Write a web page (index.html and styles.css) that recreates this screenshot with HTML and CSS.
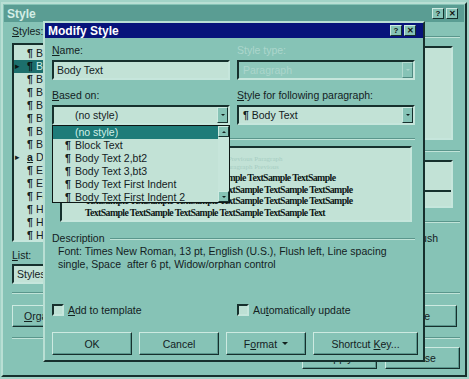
FILE: index.html
```html
<!DOCTYPE html>
<html lang="en">
<head>
    <meta charset="UTF-8">
    <title>Modify Style</title>
    <link rel="stylesheet" href="styles.css">
</head>
<body>
<div class="desk">

    <!-- Style dialog, sitting behind -->
    <div class="win style-win">
        <div class="title inactive">
            <span>Style</span>
            <div class="tbtns"><span class="tb">?</span><span class="tb">&#x2715;</span></div>
        </div>
        <div class="sbody">
            <div class="stop">
                <div class="scol">
                    <div class="lbl first"><u>S</u>tyles:</div>
                    <div class="listbox">
                        <div class="li"><span class="mk"></span><span class="pil">¶</span>Balloon Text</div>
                        <div class="li sel"><span class="mk">&#x25B8;</span><span class="pil">¶</span>Body Text</div>
                        <div class="li"><span class="mk"></span><span class="pil">¶</span>Body Text 2,bt2</div>
                        <div class="li"><span class="mk"></span><span class="pil">¶</span>Body Text 3,bt3</div>
                        <div class="li"><span class="mk"></span><span class="pil">¶</span>Body Text First Indent</div>
                        <div class="li"><span class="mk"></span><span class="pil">¶</span>Body Text First Indent 2</div>
                        <div class="li"><span class="mk"></span><span class="pil">¶</span>Body Text Indent</div>
                        <div class="li"><span class="mk"></span><span class="pil">¶</span>Bullet</div>
                        <div class="li"><span class="mk">&#x25B8;</span><span class="pil"><u>a</u></span>Default Paragraph Font</div>
                        <div class="li"><span class="mk"></span><span class="pil">¶</span>Envelope Address</div>
                        <div class="li"><span class="mk"></span><span class="pil">¶</span>Envelope Return</div>
                        <div class="li"><span class="mk"></span><span class="pil">¶</span>Footer</div>
                        <div class="li"><span class="mk"></span><span class="pil">¶</span>Header</div>
                        <div class="li"><span class="mk"></span><span class="pil">¶</span>Heading 1</div>
                        <div class="li"><span class="mk"></span><span class="pil">¶</span>Heading 2</div>
                    </div>
                    <div class="lbl list-lbl"><u>L</u>ist:</div>
                    <div class="field-box small">Styles in use</div>
                </div>
                <div class="srest">
                    <div class="etch top"></div>
                    <div class="well tall"></div>
                    <div class="etch"></div>
                    <div class="well short"><div class="split"></div></div>
                    <div class="etch"></div>
                    <div class="sdesc">English (U.S.), Flush</div>
                </div>
            </div>
            <div class="etch full"></div>
            <div class="srow">
                <div class="btn org"><span><u>O</u>rganizer...</span></div>
                <div class="btn del"><span><u>D</u>elete</span></div>
            </div>
            <div class="etch full low"></div>
            <div class="srow end">
                <div class="btn wide">Apply</div>
                <div class="btn wide">Close</div>
            </div>
        </div>
    </div>

    <!-- Modify Style dialog -->
    <div class="win modify">
        <div class="title">
            <span>Modify Style</span>
            <div class="tbtns"><span class="tb">?</span><span class="tb">&#x2715;</span></div>
        </div>
        <div class="mbody">
            <div class="row2">
                <div>
                    <div class="lbl"><u>N</u>ame:</div>
                    <div class="field-box">Body Text</div>
                </div>
                <div class="off">
                    <div class="lbl">Style type:</div>
                    <div class="combo dis"><span class="val">Paragraph</span><span class="dd"></span></div>
                </div>
            </div>
            <div class="row2 second">
                <div>
                    <div class="lbl"><u>B</u>ased on:</div>
                    <div class="combo"><span class="val nostyle">(no style)</span><span class="dd"></span></div>
                </div>
                <div>
                    <div class="lbl"><u>S</u>tyle for following paragraph:</div>
                    <div class="combo"><span class="val"><b class="pil">¶</b> Body Text</span><span class="dd"></span></div>
                </div>
            </div>

            <div class="sep"><span>Preview</span></div>
            <div class="preview">
                <div class="prev-old">Paragraph Previous Paragraph Previous Paragraph Previous Paragraph</div>
                <div class="prev-old">Previous Paragraph Previous Paragraph Previous Paragraph Previous</div>
                <div class="sample">
                    <div class="ln lead">TextSample TextSample TextSample TextSample TextSample TextSample</div>
                    <div class="ln">TextSample TextSample TextSample TextSample TextSample TextSample</div>
                    <div class="ln">TextSample TextSample TextSample TextSample TextSample TextSample</div>
                    <div class="ln">TextSample TextSample TextSample TextSample TextSample Text</div>
                </div>
            </div>

            <div class="sep"><span>Description</span></div>
            <div class="desc">
                Font: Times New Roman, 13 pt, English (U.S.), Flush left, Line spacing<br>
                single, Space&nbsp; after 6 pt, Widow/orphan control
            </div>

            <div class="row2 checks">
                <label class="chk"><span class="box"></span><span><u>A</u>dd to template</span></label>
                <label class="chk"><span class="box"></span><span>Au<u>t</u>omatically update</span></label>
            </div>

            <div class="btnrow">
                <div class="btn">OK</div>
                <div class="btn">Cancel</div>
                <div class="btn"><span>F<u>o</u>rmat</span><span class="arr"></span></div>
                <div class="btn"><span>Shortcut <u>K</u>ey...</span></div>
            </div>
        </div>

        <!-- open list of the Based on box -->
        <div class="droplist">
            <div class="items">
                <div class="di hi nostyle">(no style)</div>
                <div class="di"><b class="pil">¶</b>Block Text</div>
                <div class="di"><b class="pil">¶</b>Body Text 2,bt2</div>
                <div class="di"><b class="pil">¶</b>Body Text 3,bt3</div>
                <div class="di"><b class="pil">¶</b>Body Text First Indent</div>
                <div class="di"><b class="pil">¶</b>Body Text First Indent 2</div>
            </div>
            <div class="vscroll">
                <span class="sb up"></span>
                <span class="sb down"></span>
            </div>
        </div>
    </div>

</div>
</body>
</html>
```

FILE: styles.css
```css
body {
    margin: 0;
    background-color: #a2d3c7;
    font-family: "Liberation Sans", Arial, sans-serif;
    font-size: 10.5px;
    color: #13211e;
}
u {
    text-decoration: underline;
    text-underline-offset: 1px;
}
.desk {
    position: relative;
    width: 469px;
    height: 379px;
    overflow: hidden;
}

/* window frames */
.win {
    position: absolute;
    box-sizing: border-box;
    background-color: #86c3b6;
    border: 2px solid;
    border-color: #b9dfd4 #16302d #16302d #b9dfd4;
}
.style-win {
    left: 1px;
    top: 2px;
    width: 466px;
    height: 375px;
    padding: 1px;
}
.modify {
    left: 43px;
    top: 21px;
    width: 382px;
    height: 341px;
}
.title {
    height: 17px;
    display: flex;
    align-items: center;
    justify-content: space-between;
    padding: 0 6px 0 3px;
    font-weight: bold;
    font-size: 12px;
    color: #fff;
    background-color: #07137a;
}
.title.inactive {
    background-color: #5a9d93;
    color: #d3ede6;
}
.modify .title {
    height: 15px;
    padding-right: 7px;
}
.tbtns {
    display: flex;
    gap: 2px;
}
.tb {
    width: 10px;
    height: 9px;
    background-color: #86c3b6;
    border: 1px solid;
    border-color: #cdeae1 #16302d #16302d #cdeae1;
    font-size: 8px;
    line-height: 9px;
    text-align: center;
    color: #111;
}

/* common bits */
.lbl {
    line-height: 13px;
    white-space: nowrap;
}
.field-box {
    box-sizing: border-box;
    height: 20px;
    margin-top: 3px;
    padding-left: 3px;
    line-height: 16px;
    background-color: #c2e2d6;
    border: 2px solid;
    border-color: #16302d #c6e6dc #c6e6dc #16302d;
    white-space: nowrap;
    overflow: hidden;
}
.field-box.small {
    margin-top: 2px;
}
.combo {
    box-sizing: border-box;
    height: 20px;
    margin-top: 3px;
    display: flex;
    align-items: stretch;
    background-color: #c2e2d6;
    border: 2px solid;
    border-color: #16302d #c6e6dc #c6e6dc #16302d;
}
.combo .val {
    flex: 1;
    line-height: 16px;
    padding-left: 4px;
    white-space: nowrap;
}
.combo .val.nostyle {
    padding-left: 21px;
}
.combo.dis {
    background-color: #8ec8bb;
}
.off .lbl,
.combo.dis .val {
    color: #acd6cc;
}
.dd {
    width: 11px;
    box-sizing: border-box;
    background-color: #86c3b6;
    border: 1px solid;
    border-color: #cdeae1 #16302d #16302d #cdeae1;
    display: flex;
    align-items: center;
    justify-content: center;
}
.dd::after {
    content: "";
    border-left: 2px solid transparent;
    border-right: 2px solid transparent;
    border-top: 2px solid #13211e;
}
.combo.dis .dd {
    border-color: #b3dbd0 #4f8a81 #4f8a81 #b3dbd0;
}
.combo.dis .dd::after {
    border-top-color: #acd6cc;
}
.pil {
    font-weight: bold;
}
.etch {
    height: 0;
    border-top: 1px solid #5a968c;
    border-bottom: 1px solid #c0e3d8;
}
.btn {
    box-sizing: border-box;
    height: 22px;
    display: flex;
    align-items: center;
    justify-content: center;
    gap: 5px;
    background-color: #86c3b6;
    border: 1px solid;
    border-color: #cdeae1 #16302d #16302d #cdeae1;
    box-shadow: inset -1px -1px 0 #5a968c;
    white-space: nowrap;
}

/* Style dialog body */
.sbody {
    padding: 0 4px 0 8px;
}
.stop {
    display: flex;
    height: 262px;
}
.scol {
    width: 160px;
}
.lbl.first {
    margin-top: 3px;
}
.listbox {
    box-sizing: border-box;
    height: 199px;
    margin-top: 5px;
    padding: 2px 0;
    background-color: #c2e2d6;
    border: 2px solid;
    border-color: #16302d #c6e6dc #c6e6dc #16302d;
    overflow: hidden;
}
.li {
    display: flex;
    height: 13px;
    line-height: 13px;
    white-space: nowrap;
}
.li .mk {
    width: 10px;
    font-size: 9px;
    padding-left: 1px;
    box-sizing: border-box;
}
.li .pil {
    width: 12px;
    text-align: center;
}
.li.sel {
    background-color: #1c6f6c;
    color: #cfeee6;
}
.li.sel .mk,
.li.sel .pil {
    color: #0c1412;
}
.list-lbl {
    margin-top: 7px;
}
.srest {
    flex: 1;
}
.etch.top {
    margin-top: 14px;
}
.well {
    margin: 8px 7px 10px 0;
    background-color: #c2e2d6;
    border: 2px solid;
    border-color: #16302d #c6e6dc #c6e6dc #16302d;
}
.well.tall {
    height: 90px;
}
.well.short {
    height: 44px;
    margin-bottom: 13px;
}
.split {
    margin-top: 28px;
    border-top: 2px solid #16302d;
}
.sdesc {
    margin-top: 9px;
    line-height: 13px;
    text-align: right;
    padding-right: 22px;
}
.etch.full {
    margin-top: 8px;
}
.etch.full.low {
    margin-top: 10px;
}
.srow {
    display: flex;
    justify-content: space-between;
    margin-top: 11px;
}
.srow.end {
    justify-content: flex-end;
    gap: 8px;
    margin-top: 8px;
}
.btn.org {
    width: 80px;
    justify-content: flex-start;
    padding-left: 11px;
}
.btn.del {
    width: 84px;
    margin-right: 3px;
}
.btn.wide {
    width: 75px;
}

/* Modify Style body */
.mbody {
    padding: 0 8px 0 7px;
}
.row2 {
    display: grid;
    grid-template-columns: 178px 178px;
    gap: 7px;
}
.row2 .lbl {
    margin-top: 6px;
}
.row2.second .lbl {
    margin-top: 9px;
}
.sep {
    display: flex;
    align-items: center;
    gap: 5px;
    margin-top: 7px;
    line-height: 13px;
}
.sep::after {
    content: "";
    flex: 1;
    border-top: 1px solid #5a968c;
    border-bottom: 1px solid #c0e3d8;
}
.preview {
    height: 76px;
    box-sizing: border-box;
    margin: 1px 3px 10px 8px;
    padding: 7px 0 0 23px;
    background-color: #c2e2d6;
    border: 2px solid;
    border-color: #16302d #c6e6dc #c6e6dc #16302d;
    overflow: hidden;
}
.prev-old {
    font-family: "Liberation Serif", "Times New Roman", serif;
    font-size: 7px;
    line-height: 8px;
    color: #a6cdc2;
    white-space: nowrap;
}
.sample {
    margin-top: 1px;
    font-family: "Liberation Serif", "Times New Roman", serif;
    font-weight: bold;
    font-size: 9.8px;
    letter-spacing: -0.6px;
    line-height: 11.7px;
    color: #0d1715;
}
.ln {
    white-space: nowrap;
}
.ln.lead {
    margin-left: -17px;
}
.desc {
    padding-left: 6px;
    line-height: 13px;
}
.checks {
    margin-top: 32px;
}
.chk {
    display: flex;
    align-items: center;
    gap: 4px;
    height: 14px;
}
.chk .box {
    width: 12px;
    height: 12px;
    box-sizing: border-box;
    background-color: #bde0d4;
    border: 2px solid;
    border-color: #16302d #c6e6dc #c6e6dc #16302d;
}
.btnrow {
    display: grid;
    grid-template-columns: 80px 80px 80px 1fr;
    gap: 7px;
    margin: 15px -3px 0 0;
}
.btnrow .btn {
    height: 23px;
}
.arr {
    border-left: 3px solid transparent;
    border-right: 3px solid transparent;
    border-top: 3px solid #13211e;
}

/* dropdown list */
.droplist {
    position: absolute;
    left: 7px;
    top: 102px;
    width: 178px;
    height: 78px;
    box-sizing: border-box;
    display: flex;
    background-color: #c2e2d6;
    border: 1px solid #0d1715;
}
.items {
    flex: 1;
}
.di {
    height: 13px;
    line-height: 13px;
    padding-left: 12px;
    white-space: nowrap;
}
.di .pil {
    display: inline-block;
    width: 10px;
}
.di.nostyle {
    padding-left: 22px;
}
.di.hi {
    background-color: #1e7c79;
    color: #d2f0e8;
}
.vscroll {
    width: 11px;
    display: flex;
    flex-direction: column;
    justify-content: space-between;
    background-color: #c6e5da;
}
.sb {
    height: 11px;
    box-sizing: border-box;
    background-color: #86c3b6;
    border: 1px solid;
    border-color: #cdeae1 #16302d #16302d #cdeae1;
    display: flex;
    align-items: center;
    justify-content: center;
}
.sb::after {
    content: "";
    border-left: 2px solid transparent;
    border-right: 2px solid transparent;
}
.sb.up::after {
    border-bottom: 2px solid #13211e;
}
.sb.down::after {
    border-top: 2px solid #13211e;
}
```
